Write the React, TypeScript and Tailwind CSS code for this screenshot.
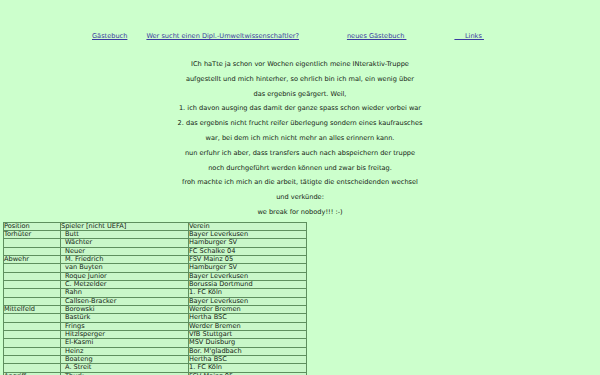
const navLinks = [
  { label: "Gästebuch", cls: "ml-[92px]" },
  { label: "Wer sucht einen Dipl.-Umweltwissenschaftler?", cls: "ml-[19px]" },
  { label: "neues Gästebuch\u00a0", cls: "ml-[48px]" },
  { label: "\u00a0\u00a0\u00a0\u00a0\u00a0Links\u00a0", cls: "ml-[48px]" },
];

const lines = [
  "ICh haTte ja schon vor Wochen eigentlich meine INteraktiv-Truppe",
  "aufgestellt und mich hinterher, so ehrlich bin ich mal, ein wenig über",
  "das ergebnis geärgert. Weil,",
  "1. ich davon ausging das damit der ganze spass schon wieder vorbei war",
  "2. das ergebnis nicht frucht reifer überlegung sondern eines kaufrausches",
  "war, bei dem ich mich nicht mehr an alles erinnern kann.",
  "nun erfuhr ich aber, dass transfers auch nach abspeichern der truppe",
  "noch durchgeführt werden können und zwar bis freitag.",
  "froh machte ich mich an die arbeit, tätigte die entscheidenden wechsel",
  "und verkünde:",
  "we break for nobody!!! :-)",
];

const rows: [string, string, string][] = [
  ["Torhüter", "Butt", "Bayer Leverkusen"],
  ["", "Wächter", "Hamburger SV"],
  ["", "Neuer", "FC Schalke 04"],
  ["Abwehr", "M. Friedrich", "FSV Mainz 05"],
  ["", "van Buyten", "Hamburger SV"],
  ["", "Roque Junior", "Bayer Leverkusen"],
  ["", "C. Metzelder", "Borussia Dortmund"],
  ["", "Rahn", "1. FC Köln"],
  ["", "Callsen-Bracker", "Bayer Leverkusen"],
  ["Mittelfeld", "Borowski", "Werder Bremen"],
  ["", "Bastürk", "Hertha BSC"],
  ["", "Frings", "Werder Bremen"],
  ["", "Hitzlsperger", "VfB Stuttgart"],
  ["", "El-Kasmi", "MSV Duisburg"],
  ["", "Heinz", "Bor. M'gladbach"],
  ["", "Boateng", "Hertha BSC"],
  ["", "A. Streit", "1. FC Köln"],
  ["Angriff", "Thurk", "FSV Mainz 05"],
];

const cell = "border border-[#5e8f5e] p-0 h-[8.33px] align-middle whitespace-nowrap";

export default function App() {
  return (
    <div className="min-h-[375px] w-[600px] bg-[#ccffcc] text-[#142414] font-['DejaVu_Sans',sans-serif] text-[6.6px] overflow-hidden">
      <nav className="flex pt-[32px] leading-[8px]">
        {navLinks.map((l) => (
          <a
            key={l.label}
            href="#"
            className={`${l.cls} text-[#3a3aa0] underline whitespace-pre`}
          >
            {l.label}
          </a>
        ))}
      </nav>

      <div className="mt-[17px] text-center leading-[14.8px]">
        {lines.map((t) => (
          <div key={t}>{t}</div>
        ))}
      </div>

      <table className="ml-[3px] mt-[2px] border-collapse bg-[#c9f7c9] leading-[7.33px] table-fixed w-[303px]">
        <colgroup>
          <col className="w-[57px]" />
          <col className="w-[128px]" />
          <col className="w-[118px]" />
        </colgroup>
        <tbody>
          <tr>
            <td className={cell}>Position</td>
            <td className={cell}>Spieler [nicht UEFA]</td>
            <td className={cell}>Verein</td>
          </tr>
          {rows.map(([pos, name, club]) => (
            <tr key={name}>
              <td className={cell}>{pos}</td>
              <td className={`${cell} pl-[4px]`}>{name}</td>
              <td className={cell}>{club}</td>
            </tr>
          ))}
        </tbody>
      </table>
    </div>
  );
}
